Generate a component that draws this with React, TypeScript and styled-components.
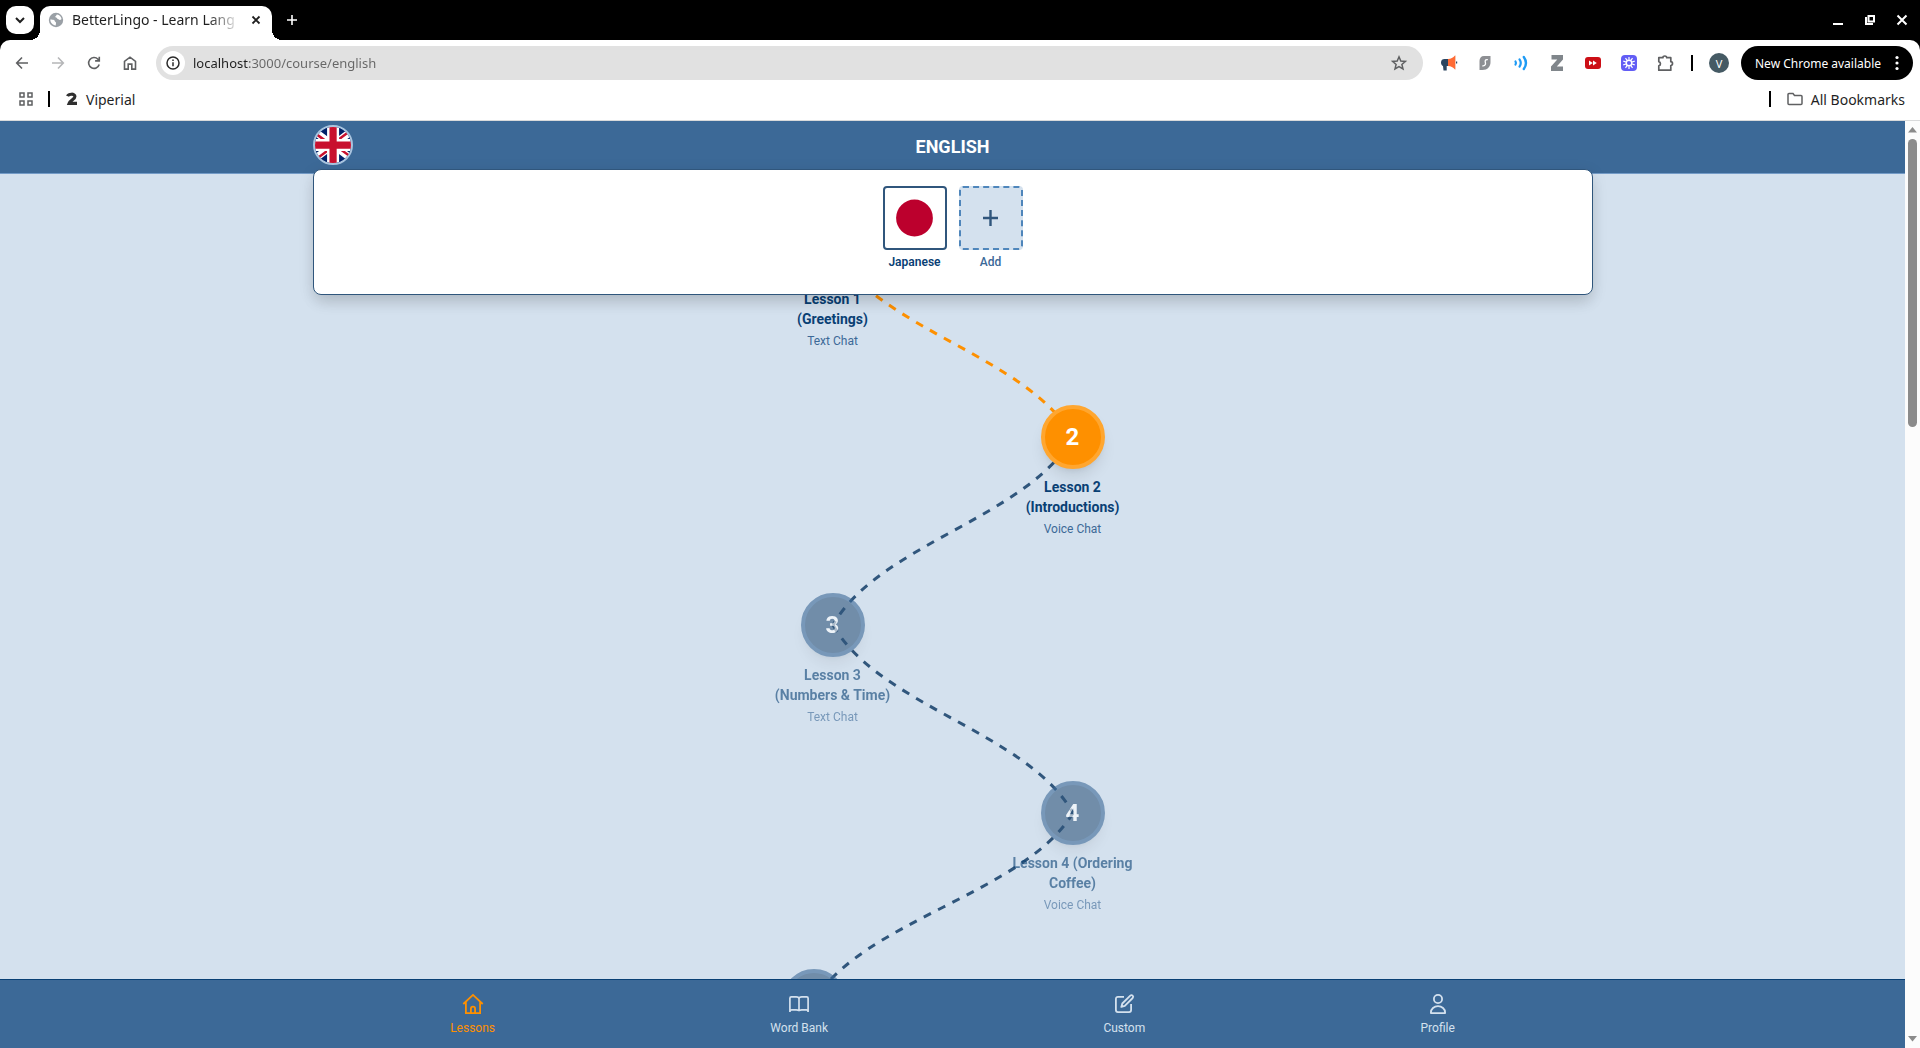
import React from "react";
import styled, { createGlobalStyle } from "styled-components";

const color = {
  navy: "#094074",
  steel: "#30567c",
  blue: "#3c6997",
  mist: "#d4e1ee",
  orange: "#fe9000",
  amber: "#ffa62f",
};

const GlobalStyle = createGlobalStyle`
  *, *::before, *::after { box-sizing: border-box; }
  html, body { margin: 0; height: 100%; overflow: hidden; }
  #root { height: 100%; }
  button { font: inherit; color: inherit; background: none; border: 0; padding: 0; cursor: pointer; }
  a { color: inherit; text-decoration: none; }
  svg { display: block; flex: none; }
`;

/* ---------- Browser frame ---------- */

const Window = styled.div`
  display: flex;
  flex-direction: column;
  height: 100vh;
  background: #000;
  font-family: "Noto Sans", "Open Sans", sans-serif;
  font-size: 14px;
  color: #1f1f1f;
`;

const TabStrip = styled.div`
  display: flex;
  align-items: center;
  height: 40px;
  flex: none;
  padding: 0 2px 0 6px;
`;

const TabSearch = styled.button`
  display: grid;
  place-items: center;
  width: 28px;
  height: 28px;
  border-radius: 10px;
  background: #fff;
`;

const Tab = styled.div`
  position: relative;
  display: flex;
  align-items: center;
  align-self: flex-end;
  width: 232px;
  height: 34px;
  margin-left: 6px;
  padding: 0 8px 6px;
  border-radius: 10px 10px 0 0;
  background: #fff;

  &::before,
  &::after {
    content: "";
    position: absolute;
    bottom: 0;
    width: 10px;
    height: 10px;
  }
  &::before {
    right: 100%;
    background: radial-gradient(circle at 0 0, transparent 10px, #fff 10px);
  }
  &::after {
    left: 100%;
    background: radial-gradient(circle at 100% 0, transparent 10px, #fff 10px);
  }
`;

const TabTitle = styled.span`
  flex: 1;
  min-width: 0;
  margin: 0 8px;
  white-space: nowrap;
  font-size: 14px;
  line-height: 20px;
  mask-image: linear-gradient(to right, #000 136px, transparent 168px);
`;

const IconButton = styled.button<{ $size?: number; $tone?: string }>`
  display: grid;
  place-items: center;
  flex: none;
  width: ${(p) => p.$size ?? 36}px;
  height: ${(p) => p.$size ?? 36}px;
  color: ${(p) => p.$tone ?? "inherit"};
`;

const Spacer = styled.div`
  flex: 1;
`;

const WindowControls = styled.div`
  display: flex;
  color: #fff;
`;

const Toolbar = styled.div`
  display: flex;
  align-items: center;
  flex: none;
  height: 40px;
  padding: 6px 7px 0 4px;
  border-radius: 10px 10px 0 0;
  background: #fff;
  color: #5f6062;
`;

const AddressBar = styled.label`
  display: flex;
  align-items: center;
  flex: 1;
  height: 34px;
  margin: 0 8px;
  padding: 0 6px 0 5px;
  border-radius: 17px;
  background: #e1e1e1;
`;

const SiteInfo = styled.span`
  display: grid;
  place-items: center;
  width: 24px;
  height: 24px;
  border-radius: 50%;
  background: #fff;
  color: #2b2b2b;
`;

const AddressInput = styled.input`
  flex: 1;
  min-width: 0;
  height: 24px;
  margin-left: 8px;
  padding: 0;
  border: 0;
  outline: 0;
  font: inherit;
  font-size: 13px;
  color: transparent;
  background: linear-gradient(to right, #1f1f1f 56px, #666 56px);
  background-clip: text;
`;

const Divider = styled.span<{ $margin: string }>`
  width: 2px;
  height: 16px;
  margin: ${(p) => p.$margin};
  background: #000;
`;

const Avatar = styled.span`
  display: grid;
  place-items: center;
  width: 20px;
  height: 20px;
  border-radius: 50%;
  background: #455a64;
  color: #fff;
  font-size: 11px;
`;

const UpdateButton = styled.button`
  display: flex;
  align-items: center;
  justify-content: space-between;
  width: 172px;
  height: 34px;
  margin-left: 4px;
  padding: 0 14px;
  border-radius: 17px;
  background: #000;
  color: #fff;
  font-size: 12px;
  white-space: nowrap;
`;

const Bookmarks = styled.nav`
  display: flex;
  align-items: center;
  flex: none;
  height: 41px;
  padding: 0 15px 2px 18px;
  border-bottom: 1px solid #d9dadb;
  background: #fff;
`;

const Bookmark = styled.a`
  display: flex;
  align-items: center;
  gap: 8px;
`;

const Viewport = styled.div`
  display: flex;
  flex: 1;
  min-height: 0;
`;

const ScrollTrack = styled.div`
  display: flex;
  flex-direction: column;
  align-items: center;
  width: 15px;
  padding: 6px 0;
  background: #fcfcfc;
  color: #8b8b8b;
`;

const ScrollThumb = styled.div`
  width: 9px;
  height: 288px;
  margin-top: 6px;
  border-radius: 5px;
  background: currentColor;
`;

/* ---------- Course page ---------- */

const Page = styled.div`
  display: flex;
  flex-direction: column;
  flex: 1;
  min-width: 0;
  background: ${color.mist};
  font-family: Roboto, sans-serif;
  color: ${color.navy};
`;

const Header = styled.header`
  position: relative;
  z-index: 2;
  flex: none;
  height: 53px;
  padding-top: 4px;
  border-bottom: 1px solid #739bc7;
  background: ${color.blue};
`;

const HeaderInner = styled.div`
  position: relative;
  display: grid;
  grid-template-columns: 1fr auto 1fr;
  align-items: center;
  max-width: 1280px;
  margin: 0 auto;
`;

const FlagButton = styled.button`
  width: 40px;
  height: 40px;
  overflow: hidden;
  border: 2px solid #a9c4df;
  border-radius: 50%;
`;

const Title = styled.h1`
  margin: 0;
  padding-top: 4px;
  color: #fff;
  font-size: 18px;
  line-height: 28px;
  font-weight: 700;
`;

const CourseMenu = styled.div`
  position: absolute;
  top: calc(100% + 4px);
  left: 0;
  right: 0;
  display: flex;
  justify-content: center;
  gap: 12px;
  padding: 16px 16px 24px;
  border: 1px solid ${color.steel};
  border-radius: 8px;
  background: #fff;
  box-shadow: 0 10px 15px -3px rgba(0, 0, 0, 0.1), 0 4px 16px rgba(0, 0, 0, 0.1);
`;

const Course = styled.button<{ $muted?: boolean }>`
  display: flex;
  flex-direction: column;
  align-items: center;
  gap: 4px;
  width: 64px;
  font-size: 12px;
  line-height: 16px;
  font-weight: ${(p) => (p.$muted ? 500 : 600)};
  color: ${(p) => (p.$muted ? color.blue : color.navy)};
`;

const CourseTile = styled.span<{ $dashed?: boolean }>`
  display: grid;
  place-items: center;
  width: 64px;
  height: 64px;
  border: 2px ${(p) => (p.$dashed ? "dashed #4f86bb" : `solid ${color.steel}`)};
  border-radius: 4px;
  background: ${(p) => (p.$dashed ? color.mist : "#fff")};
  color: ${color.steel};
`;

const Lessons = styled.main`
  flex: 1;
  min-height: 0;
  overflow: hidden;
`;

const LessonMap = styled.div`
  position: relative;
  width: 480px;
  height: 1200px;
  margin: 0 auto;
`;

const Trail = styled.svg`
  position: absolute;
  inset: 0;
  width: 100%;
  height: 100%;
  overflow: visible;
`;

const Lesson = styled.a<{ $x: number; $y: number; $locked: boolean }>`
  position: absolute;
  left: ${(p) => p.$x - 80}px;
  top: ${(p) => p.$y - 32}px;
  display: flex;
  flex-direction: column;
  align-items: center;
  width: 160px;
  text-align: center;
  opacity: ${(p) => (p.$locked ? 0.6 : 1)};
`;

const Badge = styled.span<{ $locked: boolean }>`
  display: grid;
  place-items: center;
  width: 64px;
  height: 64px;
  border: 4px solid ${(p) => (p.$locked ? color.blue : color.amber)};
  border-radius: 50%;
  background: ${(p) => (p.$locked ? color.steel : color.orange)};
  box-shadow: 0 10px 15px -3px rgba(0, 0, 0, 0.1), 0 4px 6px -4px rgba(0, 0, 0, 0.1);
  color: #fff;
  font-size: 24px;
  line-height: 32px;
  font-weight: 700;
`;

const LessonName = styled.span`
  margin-top: 8px;
  font-size: 14px;
  line-height: 20px;
  font-weight: 700;
  white-space: pre-line;
`;

const LessonKind = styled.span`
  margin-top: 4px;
  color: ${color.blue};
  font-size: 12px;
  line-height: 16px;
`;

const BottomNav = styled.nav`
  position: relative;
  z-index: 1;
  flex: none;
  padding: 12px 0;
  border-top: 1px solid ${color.navy};
  background: ${color.blue};
`;

const BottomNavInner = styled.div`
  display: flex;
  justify-content: space-around;
  max-width: 1280px;
  margin: 0 auto;
`;

const NavItem = styled.a<{ $active?: boolean }>`
  display: flex;
  flex-direction: column;
  align-items: center;
  gap: 4px;
  color: ${(p) => (p.$active ? color.orange : color.mist)};
  font-size: 12px;
  line-height: 16px;
`;

/* ---------- Icons ---------- */

const Glyph = ({ size = 20, width = 1.6, children }: { size?: number; width?: number; children: React.ReactNode }) => (
  <svg
    width={size}
    height={size}
    viewBox={`0 0 ${size} ${size}`}
    fill="none"
    stroke="currentColor"
    strokeWidth={width}
    aria-hidden="true"
  >
    {children}
  </svg>
);

const UnionJack = () => (
  <svg width="36" height="36" viewBox="0 0 640 480" preserveAspectRatio="xMidYMid slice" aria-hidden="true">
    <path fill="#012169" d="M0 0h640v480H0z" />
    <path fill="#fff" d="m75 0 244 181L562 0h78v62L400 241l240 178v61h-80L320 301 81 480H0v-60l239-178L0 64V0z" />
    <path fill="#c8102e" d="m424 281 216 159v40L369 281zm-184 20 6 35L54 480H0zM640 0v3L391 191l2-44L590 0zM0 0l239 176h-60L0 42z" />
    <path fill="#fff" d="M241 0v480h160V0zM0 160v160h640V160z" />
    <path fill="#c8102e" d="M0 193v96h640v-96zM273 0v480h96V0z" />
  </svg>
);

const HomeIcon = () => (
  <Glyph size={24} width={1.8}>
    <path d="M2.3 12 12 2.9 21.7 12M4.9 10v11.1h14.2V10M9.9 21v-4.2a2.1 2.1 0 0 1 4.2 0V21" />
  </Glyph>
);

const BookIcon = () => (
  <Glyph size={24} width={1.7}>
    <path d="M2.9 20V6.2c0-.8.6-1.4 1.4-1.4h4.9c1.6 0 2.8.7 2.8 1.9v12.6c0-.8-1.2-1.4-2.8-1.4H4.6c-1 0-1.7.9-1.7 2.1ZM21.1 20V6.2c0-.8-.6-1.4-1.4-1.4h-4.9c-1.6 0-2.8.7-2.8 1.9v12.6c0-.8 1.2-1.4 2.8-1.4h4.6c1 0 1.7.9 1.7 2.1Z" />
  </Glyph>
);

const EditIcon = () => (
  <Glyph size={24} width={1.8}>
    <path d="M12 4.9H5.9a2 2 0 0 0-2 2v11.2a2 2 0 0 0 2 2h11.2a2 2 0 0 0 2-2V12" />
    <path d="M18.3 3.6a1.7 1.7 0 0 1 2.4 2.4l-7.9 7.9-3.5 1 1-3.4z" strokeLinejoin="round" />
  </Glyph>
);

const ProfileIcon = () => (
  <Glyph size={24} width={1.8}>
    <circle cx="12" cy="7" r="4.1" />
    <path d="M4.9 21.1v-.6a7.1 6.3 0 0 1 14.2 0v.6z" strokeLinejoin="round" />
  </Glyph>
);

const GlobeIcon = () => (
  <svg width="16" height="16" viewBox="0 0 16 16" aria-hidden="true">
    <circle cx="8" cy="8" r="7.2" fill="#9aa0a6" />
    <path
      d="M2.300 7.600c1.500.200 2.600.100 3.700.500 1.100.500.400 1.300 1.500 1.800 1 .5.400 1.800.200 3.600-3-.3-5.300-2.800-5.400-5.900zM9 2.500c-.9.800-.6 1.300-1.500 1.800-.6.600-.2 1.100.6 1.300 1 .2.900 1.200 1.800 1.500.9.300 1.200 1 2.200.8.800-.1.900-.7 1.500-.6-.3-2.500-2.200-4.500-4.600-4.800z"
      fill="#fff"
    />
  </svg>
);

const MegaphoneIcon = () => (
  <svg width="18" height="18" viewBox="0 0 18 18" aria-hidden="true">
    <path d="M1 8.500C1 6 2.500 5 4.500 5H8v7H6.700v4.600H3.500L3 12C1.500 11.400 1 10 1 8.500Z" fill="#2b4560" />
    <path d="M8 5c3 0 5-1.500 7-3.500v14C13 13.500 11 12 8 12Z" fill="#ff6b35" />
    <path d="M15 1.500h1v14h-1z" fill="#f6c9b4" />
    <path d="M16 7.500h1.200v2H16z" fill="#2b4560" />
  </svg>
);

const ShieldIcon = () => (
  <svg width="16" height="16" viewBox="0 0 16 16" aria-hidden="true">
    <path d="M7 1h6.500v6c0 4.500-3 8-8 8H2.500V6c0-3 1.500-5 4.500-5Z" fill="#8d8f93" />
    <path d="M10.800 4.600C9.200 4.400 8.200 5 8.200 6.300c0 1.300.6 1.700.2 3-.4 1.300-1.500 1.800-3.100 1.600" fill="none" stroke="#fff" strokeWidth="1.300" />
  </svg>
);

const WavesIcon = () => (
  <svg width="16" height="16" viewBox="0 0 16 16" fill="none" stroke="#1e9bf5" strokeLinecap="round" aria-hidden="true">
    <path d="M2.500 6.500c.6.900.6 2.100 0 3" strokeWidth="2.200" />
    <path d="M6.500 4.300c1.500 2.200 1.500 5.200 0 7.400" strokeWidth="2.200" />
    <path d="M10.800 2c2.600 3.600 2.600 8.400 0 12" strokeWidth="2.400" />
  </svg>
);

const ZedIcon = () => (
  <svg width="16" height="18" viewBox="0 0 16 18" aria-hidden="true">
    <path d="M2.500 1H14v4.600L7.800 12.500H14V17H2V12.600l6.300-7.100H2.500z" fill="#80868b" />
  </svg>
);

const ForwardVideoIcon = () => (
  <svg width="18" height="18" viewBox="0 0 18 18" aria-hidden="true">
    <rect x="1" y="3" width="16" height="12" rx="3" fill="#cc0f16" />
    <path d="M5 6.500 8.800 9 5 11.500zM9 6.500 12.800 9 9 11.500z" fill="#fff" />
  </svg>
);

const SparkIcon = () => (
  <svg width="18" height="18" viewBox="0 0 18 18" stroke="#fff" fill="none" aria-hidden="true">
    <rect x="1" y="1" width="16" height="16" rx="4" fill="#625df5" stroke="none" />
    <circle cx="9" cy="9" r="2.800" strokeWidth="1.500" />
    {Array.from({ length: 10 }, (_, i) => (
      <path key={i} d="M9 3v2.800" strokeWidth="1.200" transform={`rotate(${i * 36} 9 9)`} />
    ))}
  </svg>
);

const PuzzleIcon = () => (
  <Glyph size={20} width={1.7}>
    <path
      d="M3.800 4.700h4.100a1.900 1.700 0 0 1 3.800 0h4.100v4a1.700 1.900 0 0 1 0 3.800v4.700H3.800v-4.400a2.100 2.100 0 0 0 0-4.100z"
      strokeLinejoin="round"
    />
  </Glyph>
);

/* ---------- Lesson trail ---------- */

const STEP = 188;
const FIRST = 75;

const lessons = [
  { x: 120, name: "Lesson 1\n(Greetings)", kind: "Text Chat", locked: false },
  { x: 360, name: "Lesson 2\n(Introductions)", kind: "Voice Chat", locked: false },
  { x: 120, name: "Lesson 3\n(Numbers & Time)", kind: "Text Chat", locked: true },
  { x: 360, name: "Lesson 4 (Ordering\nCoffee)", kind: "Voice Chat", locked: true },
  { x: 101, name: "", kind: "", locked: true },
].map((lesson, i) => ({ ...lesson, y: FIRST + i * STEP }));

const segment = (from: { x: number; y: number }, to: { x: number; y: number }) => {
  const dx = (to.x - from.x) * 0.19;
  const dy = (to.y - from.y) * 0.43;
  return `M${from.x} ${from.y}C${from.x + dx} ${from.y + dy} ${to.x - dx} ${to.y - dy} ${to.x} ${to.y}`;
};

const navItems = [
  { label: "Lessons", Icon: HomeIcon, active: true },
  { label: "Word Bank", Icon: BookIcon },
  { label: "Custom", Icon: EditIcon },
  { label: "Profile", Icon: ProfileIcon },
];

const extensions = [
  { label: "Megaphone", Icon: MegaphoneIcon },
  { label: "Shield", Icon: ShieldIcon },
  { label: "Read aloud", Icon: WavesIcon },
  { label: "Zed", Icon: ZedIcon },
  { label: "Video speed", Icon: ForwardVideoIcon },
  { label: "Spark", Icon: SparkIcon },
  { label: "Extensions", Icon: PuzzleIcon },
];

const BrowserFrame = () => (
  <>
    <TabStrip>
      <TabSearch aria-label="Search tabs">
        <Glyph size={12} width={2}>
          <path d="m2 4 4 4 4-4" />
        </Glyph>
      </TabSearch>
      <Tab>
        <GlobeIcon />
        <TabTitle>BetterLingo - Learn Lang</TabTitle>
        <IconButton $size={16} aria-label="Close tab">
          <Glyph size={12} width={1.8}>
            <path d="m2.500 2.500 7 7m0-7-7 7" />
          </Glyph>
        </IconButton>
      </Tab>
      <IconButton $size={40} $tone="#fff" aria-label="New tab">
        <Glyph size={12} width={1.6}>
          <path d="M6 1v10M1 6h10" />
        </Glyph>
      </IconButton>
      <Spacer />
      <WindowControls>
        <IconButton $size={32} aria-label="Minimize">
          <Glyph size={12} width={2}>
            <path d="M1 10h10" />
          </Glyph>
        </IconButton>
        <IconButton $size={32} aria-label="Restore">
          <Glyph size={12} width={2}>
            <path d="M4.500 2H10v5.500H4.500zM2 3v7h7" />
          </Glyph>
        </IconButton>
        <IconButton $size={32} aria-label="Close window">
          <Glyph size={12} width={2}>
            <path d="m1.500 1.500 9 9m0-9-9 9" />
          </Glyph>
        </IconButton>
      </WindowControls>
    </TabStrip>

    <Toolbar>
      <IconButton aria-label="Back">
        <Glyph>
          <path d="M16 10H5m5-5.500L4.700 10l5.300 5.500" />
        </Glyph>
      </IconButton>
      <IconButton aria-label="Forward" disabled $tone="#b5b6b8">
        <Glyph>
          <path d="M4 10h11m-5-5.500 5.300 5.500-5.300 5.500" />
        </Glyph>
      </IconButton>
      <IconButton aria-label="Reload">
        <Glyph>
          <path d="M15.200 11.500A5.400 5.400 0 1 1 14 6.300l1 1M15.300 3.800v4.100h-4.200" />
        </Glyph>
      </IconButton>
      <IconButton aria-label="Home">
        <Glyph>
          <path d="M4.500 8.300 10 4.200l5.500 4.100v7.800h-3.700v-5H8.200v5H4.500z" />
        </Glyph>
      </IconButton>
      <AddressBar>
        <SiteInfo>
          <Glyph size={16} width={1.500}>
            <circle cx="8" cy="8" r="6" />
            <path d="M8 7.200v4M8 4.500v1.500" />
          </Glyph>
        </SiteInfo>
        <AddressInput aria-label="Address" type="text" defaultValue="localhost:3000/course/english" />
        <IconButton aria-label="Bookmark this page">
          <Glyph width={1.500}>
            <path d="m10 3.800 1.800 4.200 4.600.4-3.500 3 1.100 4.500-4-2.400-4 2.400 1.100-4.500-3.500-3L8.200 8z" />
          </Glyph>
        </IconButton>
      </AddressBar>
      {extensions.map(({ label, Icon }) => (
        <IconButton key={label} aria-label={label}>
          <Icon />
        </IconButton>
      ))}
      <Divider $margin="0 8px" />
      <IconButton aria-label="Account">
        <Avatar>V</Avatar>
      </IconButton>
      <UpdateButton>
        New Chrome available
        <svg width="4" height="16" viewBox="0 0 4 16" fill="#fff" aria-hidden="true">
          <circle cx="2" cy="2.500" r="1.600" />
          <circle cx="2" cy="8" r="1.600" />
          <circle cx="2" cy="13.500" r="1.600" />
        </svg>
      </UpdateButton>
    </Toolbar>

    <Bookmarks aria-label="Bookmarks">
      <IconButton $size={16} aria-label="Apps">
        <Glyph size={16} width={1.500}>
          <path d="M2 2h4v4H2zM10 2h4v4h-4zM2 10h4v4H2zM10 10h4v4h-4z" stroke="#5f6062" />
        </Glyph>
      </IconButton>
      <Divider $margin="0 16px 0 14px" />
      <Bookmark href="#viperial">
        <svg width="12" height="14" viewBox="0 0 12 14" fill="none" stroke="#2f2f2f" strokeWidth="3.200" aria-hidden="true">
          <path d="M1.500 4.200C2.500 1.800 8.900 1.200 8.900 4.600 8.900 7.200 4.500 8 3.200 11.300H11" />
        </svg>
        Viperial
      </Bookmark>
      <Spacer />
      <Divider $margin="0 16px" />
      <Bookmark as="button">
        <Glyph size={16} width={1.500}>
          <path d="M1 12.500v-9a1 1 0 0 1 1-1h4l1.500 2H14a1 1 0 0 1 1 1v7a1 1 0 0 1-1 1H2a1 1 0 0 1-1-1z" stroke="#5f6062" />
        </Glyph>
        All Bookmarks
      </Bookmark>
    </Bookmarks>
  </>
);

export default function App() {
  return (
    <Window>
      <GlobalStyle />
      <BrowserFrame />
      <Viewport>
        <Page>
          <Header>
            <HeaderInner>
              <FlagButton aria-label="Switch course" aria-expanded="true">
                <UnionJack />
              </FlagButton>
              <Title>ENGLISH</Title>
              <CourseMenu>
                <Course>
                  <CourseTile>
                    <svg width="60" height="60" viewBox="0 0 60 60" aria-hidden="true">
                      <circle cx="29.500" cy="30" r="18.400" fill="#bc002d" />
                    </svg>
                  </CourseTile>
                  Japanese
                </Course>
                <Course $muted>
                  <CourseTile $dashed>
                    <Glyph size={16} width={2.400}>
                      <path d="M7.500 0v16M0 8h15" />
                    </Glyph>
                  </CourseTile>
                  Add
                </Course>
              </CourseMenu>
            </HeaderInner>
          </Header>

          <Lessons>
            <LessonMap>
              <Trail aria-hidden="true" fill="none" strokeWidth="3" strokeDasharray="8 8">
                {lessons.slice(1).map((to, i) => (
                  <path key={i} d={segment(lessons[i], to)} stroke={to.locked ? color.steel : color.orange} />
                ))}
              </Trail>
              {lessons.map((lesson, i) => (
                <Lesson
                  key={i}
                  href={`#lesson-${i + 1}`}
                  aria-label={`Lesson ${i + 1}`}
                  $x={lesson.x}
                  $y={lesson.y}
                  $locked={lesson.locked}
                >
                  <Badge $locked={lesson.locked}>{lesson.name && i + 1}</Badge>
                  {lesson.name && <LessonName>{lesson.name}</LessonName>}
                  {lesson.kind && <LessonKind>{lesson.kind}</LessonKind>}
                </Lesson>
              ))}
            </LessonMap>
          </Lessons>

          <BottomNav aria-label="Main">
            <BottomNavInner>
              {navItems.map(({ label, Icon, active }) => (
                <NavItem key={label} href={`#${label}`} $active={active}>
                  <Icon />
                  {label}
                </NavItem>
              ))}
            </BottomNavInner>
          </BottomNav>
        </Page>

        <ScrollTrack aria-hidden="true">
          <svg width="9" height="6" viewBox="0 0 9 6" fill="currentColor">
            <path d="M4.500 0 9 5.500H0z" />
          </svg>
          <ScrollThumb />
          <Spacer />
          <svg width="9" height="6" viewBox="0 0 9 6" fill="currentColor">
            <path d="M4.500 5.500 9 0H0z" />
          </svg>
        </ScrollTrack>
      </Viewport>
    </Window>
  );
}
